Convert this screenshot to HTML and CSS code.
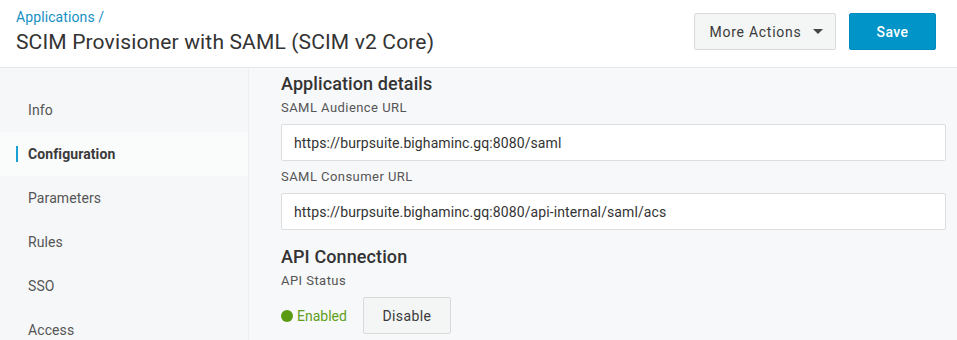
FILE: index.html
```html
<!DOCTYPE html>
<html>
<head>
<meta charset="utf-8">
<link rel="stylesheet" href="styles.css">
</head>
<body>
<header class="header">
  <div class="titles">
    <a class="crumb">Applications /</a>
    <h1 class="title">SCIM Provisioner with SAML (SCIM v2 Core)</h1>
  </div>
  <div class="actions">
    <button class="btn btn-secondary">More Actions <span class="caret"></span></button>
    <button class="btn btn-primary">Save</button>
  </div>
</header>
<div class="body">
  <nav class="sidebar">
    <div class="nav-item">Info</div>
    <div class="nav-item active">Configuration</div>
    <div class="nav-item">Parameters</div>
    <div class="nav-item">Rules</div>
    <div class="nav-item">SSO</div>
    <div class="nav-item">Access</div>
  </nav>
  <main class="main">
    <h2 class="section-title">Application details</h2>
    <label class="field-label">SAML Audience URL</label>
    <div class="input">https://burpsuite.bighaminc.gq:8080/saml</div>
    <label class="field-label after-input">SAML Consumer URL</label>
    <div class="input">https://burpsuite.bighaminc.gq:8080/api-internal/saml/acs</div>
    <h2 class="section-title section-gap">API Connection</h2>
    <label class="field-label">API Status</label>
    <div class="status-row">
      <span class="status"><span class="dot"></span>Enabled</span>
      <button class="btn btn-secondary btn-disable">Disable</button>
    </div>
  </main>
</div>
</body>
</html>
```
FILE: styles.css
```css
* { box-sizing: border-box; }
html, body { margin: 0; padding: 0; }
body {
  font-family: Roboto, "Liberation Sans", Arial, sans-serif;
  color: #333;
  background: #f7f8fa;
  width: 957px;
  height: 340px;
  overflow: hidden;
}
.header {
  height: 68px;
  background: #fff;
  border-bottom: 1px solid #e4e6e8;
  display: flex;
  justify-content: space-between;
  align-items: flex-start;
  padding: 7px 21px 0 16px;
}
.titles { display: flex; flex-direction: column; }
.crumb {
  font-size: 14px;
  line-height: 20px;
  color: #1790c6;
  height: 21px;
  letter-spacing: 0.1px;
}
.title {
  margin: 0;
  font-size: 21px;
  font-weight: 400;
  line-height: 28px;
  color: #333;
  letter-spacing: 0.15px;
}
.actions {
  display: flex;
  gap: 13px;
  padding-top: 6px;
}
.btn {
  font-family: inherit;
  font-size: 14px;
  height: 37px;
  border-radius: 2px;
  cursor: pointer;
  letter-spacing: 0.4px;
}
.btn-secondary {
  background: #f4f5f5;
  border: 1px solid #d8dadc;
  color: #3a3a3a;
  padding: 0 16px;
  display: inline-flex;
  align-items: center;
}
.actions .btn-secondary {
  width: 142px;
  justify-content: center;
  gap: 9px;
  padding: 0 0 0 2px;
  letter-spacing: 0.75px;
}
.caret {
  width: 0; height: 0;
  border-left: 5px solid transparent;
  border-right: 5px solid transparent;
  border-top: 5px solid #444;
  margin-left: 2px;
}
.btn-primary {
  background: #0094c8;
  border: 1px solid #008cbf;
  color: #fff;
  font-weight: 500;
  width: 87px;
}
.body { display: flex; height: 272px; }
.sidebar {
  width: 249px;
  flex: none;
  background: #f6f7f9;
  border-right: 1px solid #eceef0;
  padding-top: 20px;
}
.nav-item {
  height: 44px;
  display: flex;
  align-items: center;
  padding-left: 28px;
  font-size: 14px;
  color: #555;
  position: relative;
  letter-spacing: 0.1px;
}
.nav-item.active {
  background: #fafbfb;
  font-weight: 700;
  color: #3a3a3a;
}
.nav-item.active::before {
  content: "";
  position: absolute;
  left: 16px;
  top: 14px;
  width: 2px;
  height: 16px;
  background: #1a9fd4;
}
.main {
  flex: 1;
  padding: 4px 11px 0 32px;
  display: flex;
  flex-direction: column;
  align-items: stretch;
}
.section-title {
  margin: 0;
  font-size: 18px;
  font-weight: 500;
  line-height: 24px;
  color: #333;
  letter-spacing: 0.1px;
}
.section-gap { margin-top: 9px; }
.field-label {
  display: block;
  font-size: 13px;
  line-height: 20px;
  color: #555;
  margin: 2px 0 6px;
  letter-spacing: 0.45px;
}
.field-label.after-input { margin-top: 0; }
.input {
  height: 37px;
  background: #fff;
  border: 1px solid #dcdee0;
  border-radius: 2px;
  padding-left: 12px;
  display: flex;
  align-items: center;
  font-size: 14px;
  color: #333;
  margin-bottom: 6px;
  letter-spacing: 0.1px;
}
.status-row {
  display: flex;
  align-items: center;
  gap: 16px;
}
.status {
  display: inline-flex;
  align-items: center;
  font-size: 14px;
  color: #5f9f1a;
}
.dot {
  width: 12px;
  height: 12px;
  border-radius: 50%;
  background: #5a9a12;
  margin-right: 4px;
}
.btn-disable { width: 88px; justify-content: center; padding: 0; }
```
